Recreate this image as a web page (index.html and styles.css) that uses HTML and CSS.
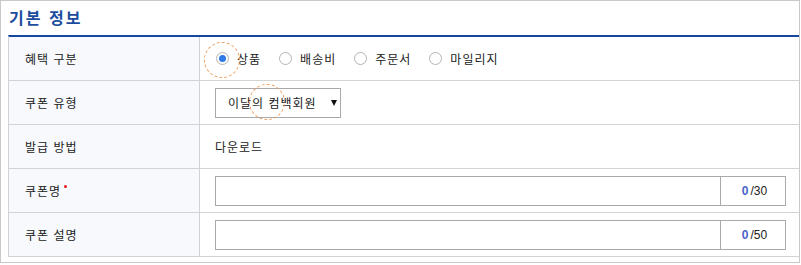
FILE: index.html
```html
<!DOCTYPE html>
<html lang="ko">
<head>
    <meta charset="UTF-8">
    <title>기본 정보</title>
    <link rel="stylesheet" href="styles.css">
</head>
<body>
    <div class="panel">
        <h2 class="panel-title">기본 정보</h2>
        <div class="form-table">
            <div class="row">
                <div class="label">혜택 구분</div>
                <div class="value">
                    <label class="radio-item"><span class="radio checked"></span>상품</label>
                    <label class="radio-item"><span class="radio"></span>배송비</label>
                    <label class="radio-item"><span class="radio"></span>주문서</label>
                    <label class="radio-item"><span class="radio"></span>마일리지</label>
                </div>
            </div>
            <div class="row">
                <div class="label">쿠폰 유형</div>
                <div class="value">
                    <div class="select">
                        <span>이달의 컴백회원</span>
                        <span class="arrow"></span>
                    </div>
                </div>
            </div>
            <div class="row">
                <div class="label">발급 방법</div>
                <div class="value">다운로드</div>
            </div>
            <div class="row">
                <div class="label">쿠폰명<span class="required"></span></div>
                <div class="value">
                    <div class="text-field">
                        <div class="text-input"></div>
                        <div class="counter"><span class="count">0</span> /30</div>
                    </div>
                </div>
            </div>
            <div class="row">
                <div class="label">쿠폰 설명</div>
                <div class="value">
                    <div class="text-field">
                        <div class="text-input"></div>
                        <div class="counter"><span class="count">0</span> /50</div>
                    </div>
                </div>
            </div>
        </div>

        <!-- highlight marks -->
        <span class="mark mark-radio"></span>
        <span class="mark mark-select"></span>
    </div>
</body>
</html>
```

FILE: styles.css
```css
body {
    margin: 0;
    font-family: "Noto Sans CJK KR", "Noto Sans", sans-serif;
    font-size: 12px;
    letter-spacing: 1px;
    color: #222;
    background-color: #ffffff;
}

.panel {
    position: relative;
    width: 800px;
    height: 263px;
    border: 1px solid #c9c9c9;
    box-sizing: border-box;
    padding: 0 0 5px 7px;
}

.panel-title {
    margin: 0;
    height: 34px;
    padding: 5px 0 0 1px;
    box-sizing: border-box;
    font-size: 16px;
    line-height: 22px;
    letter-spacing: 2px;
    font-weight: bold;
    color: #1c4d9e;
}

.form-table {
    border-top: 2px solid #14489c;
    border-left: 1px solid #d3d3d3;
}

.row {
    display: flex;
    height: 44px;
    border-bottom: 1px solid #d3d3d3;
    box-sizing: border-box;
}

.label {
    width: 191px;
    flex-shrink: 0;
    box-sizing: border-box;
    border-right: 1px solid #d3d3d3;
    background-color: #f7f9fc;
    padding-left: 16px;
    display: flex;
    align-items: center;
}

.value {
    flex: 1;
    padding-left: 15px;
    display: flex;
    align-items: center;
}

.radio-item {
    display: flex;
    align-items: center;
    margin-right: 17px;
}

.radio {
    width: 13px;
    height: 13px;
    border: 1px solid #b4b4b4;
    border-radius: 50%;
    box-sizing: border-box;
    margin: 0 8px 0 1px;
    display: flex;
    align-items: center;
    justify-content: center;
    background-color: #fff;
}

.radio.checked::after {
    content: "";
    width: 7px;
    height: 7px;
    border-radius: 50%;
    background-color: #2f7ae5;
}

.select {
    width: 126px;
    height: 30px;
    border: 1px solid #a9a9a9;
    box-sizing: border-box;
    padding: 0 3px 0 12px;
    display: flex;
    align-items: center;
    justify-content: space-between;
}

.select .arrow {
    width: 0;
    height: 0;
    border-left: 3px solid transparent;
    border-right: 3px solid transparent;
    border-top: 6px solid #111;
}

.required {
    display: inline-block;
    width: 3px;
    height: 3px;
    border-radius: 50%;
    background-color: #e8141c;
    margin: 0 0 9px 3px;
}

.text-field {
    display: flex;
    width: 571px;
    height: 30px;
    border: 1px solid #a9a9a9;
    box-sizing: border-box;
}

.text-input {
    flex: 1;
}

.counter {
    width: 65px;
    border-left: 1px solid #a9a9a9;
    box-sizing: border-box;
    display: flex;
    align-items: center;
    justify-content: center;
    font-family: "Liberation Sans", sans-serif;
    font-size: 12px;
    letter-spacing: 0;
    color: #222;
    padding-left: 3px;
}

.counter .count {
    color: #4a63c8;
    font-weight: bold;
    margin-right: 2px;
}

.mark {
    position: absolute;
    width: 36px;
    height: 36px;
    border: 1px dashed #f0a060;
    border-radius: 50%;
    box-sizing: border-box;
}

.mark-radio {
    left: 203px;
    top: 41px;
}

.mark-select {
    left: 248px;
    top: 83px;
}
```
